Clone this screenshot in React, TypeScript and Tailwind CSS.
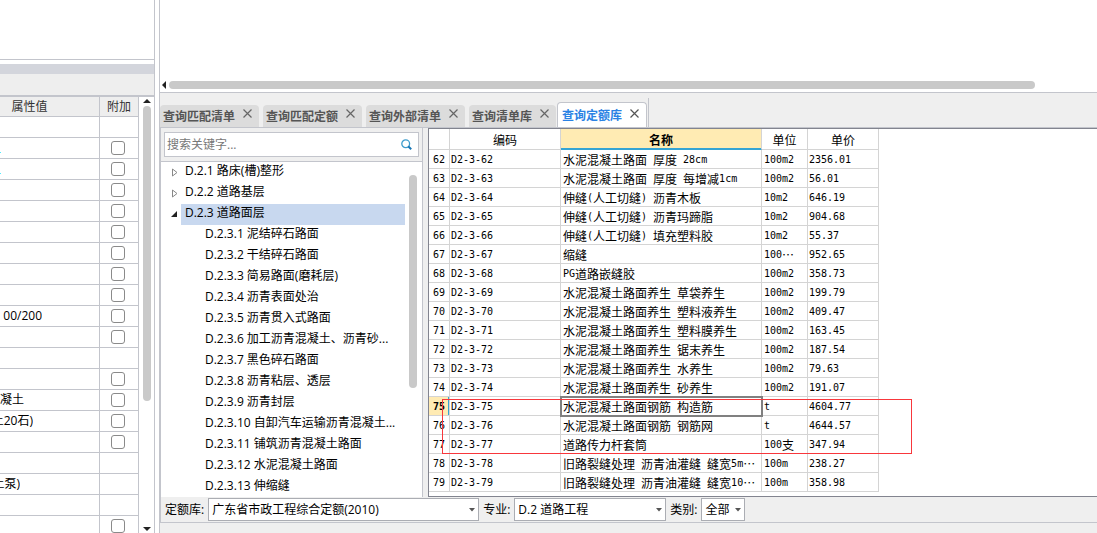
import React from "react";

const attributes = [
  { box: false },
  { box: true, mark: true },
  { box: true, mark: true },
  { box: true },
  { box: true },
  { box: true },
  { box: true },
  { box: true },
  { box: true },
  { box: true, text: "00/200", width: "w-[42px]" },
  { box: true },
  { box: false },
  { box: true },
  { box: true, text: "混凝土", width: "w-6" },
  { box: true, text: "土20石)", width: "w-[33px]" },
  { box: true },
  { box: false },
  { box: false, text: "土泵)", width: "w-5" },
  { box: false },
  { box: true },
];

const tabs = ["查询匹配清单", "查询匹配定额", "查询外部清单", "查询清单库"];

const chapters = [
  "D.2.3.1 泥结碎石路面",
  "D.2.3.2 干结碎石路面",
  "D.2.3.3 简易路面(磨耗层)",
  "D.2.3.4 沥青表面处治",
  "D.2.3.5 沥青贯入式路面",
  "D.2.3.6 加工沥青混凝土、沥青砂...",
  "D.2.3.7 黑色碎石路面",
  "D.2.3.8 沥青粘层、透层",
  "D.2.3.9 沥青封层",
  "D.2.3.10 自卸汽车运输沥青混凝土...",
  "D.2.3.11 铺筑沥青混凝土路面",
  "D.2.3.12 水泥混凝土路面",
  "D.2.3.13 伸缩缝",
];

const quotas = [
  [62, "水泥混凝土路面 厚度 28cm", "100m2", "2356.01"],
  [63, "水泥混凝土路面 厚度 每增减1cm", "100m2", "56.01"],
  [64, "伸缝(人工切缝) 沥青木板", "10m2", "646.19"],
  [65, "伸缝(人工切缝) 沥青玛蹄脂", "10m2", "904.68"],
  [66, "伸缝(人工切缝) 填充塑料胶", "10m2", "55.37"],
  [67, "缩缝", "100…", "952.65"],
  [68, "PG道路嵌缝胶", "100m2", "358.73"],
  [69, "水泥混凝土路面养生 草袋养生", "100m2", "199.79"],
  [70, "水泥混凝土路面养生 塑料液养生", "100m2", "409.47"],
  [71, "水泥混凝土路面养生 塑料膜养生", "100m2", "163.45"],
  [72, "水泥混凝土路面养生 锯末养生", "100m2", "187.54"],
  [73, "水泥混凝土路面养生 水养生", "100m2", "79.63"],
  [74, "水泥混凝土路面养生 砂养生", "100m2", "191.07"],
  [75, "水泥混凝土路面钢筋 构造筋", "t", "4604.77"],
  [76, "水泥混凝土路面钢筋 钢筋网", "t", "4644.57"],
  [77, "道路传力杆套筒", "100支", "347.94"],
  [78, "旧路裂缝处理 沥青油灌缝 缝宽5m…", "100m", "238.27"],
  [79, "旧路裂缝处理 沥青油灌缝 缝宽10…", "100m", "358.98"],
] as [number, string, string, string][];

// half-width characters take half the width of a Chinese one
function Mixed({ text, className = "pl-[2px]" }: { text: string; className?: string }) {
  return (
    <div className={"flex h-[18px] items-center pt-[2px] " + className}>
      {text
        .split(/([\x20-\x7e]+)/)
        .filter(Boolean)
        .map((part, i) =>
          /^[\x20-\x7e]/.test(part) ? (
            <span
              key={i}
              className="font-['DejaVu_Sans_Mono',monospace] text-[10px] whitespace-pre"
            >
              {part}
            </span>
          ) : (
            <span key={i}>{part}</span>
          )
        )}
    </div>
  );
}

function Close() {
  return (
    <svg width="9" height="9" viewBox="0 0 9 9" stroke="currentColor">
      <path d="M0.5 0.5L8.5 8.5M8.5 0.5L0.5 8.5" strokeWidth="1.2" />
    </svg>
  );
}

function Picker({
  id,
  label,
  value,
  width,
}: {
  id: string;
  label: string;
  value: string;
  width: string;
}) {
  return (
    <div className="flex items-center gap-1">
      <label htmlFor={id}>{label}</label>
      <div className={"relative " + width}>
        <select
          id={id}
          className="block h-[23px] w-full appearance-none border border-[#abadb3] bg-white pl-[3px] text-black outline-none"
        >
          <option>{value}</option>
        </select>
        <svg
          className="pointer-events-none absolute top-[10px] right-1"
          width="6"
          height="4"
          viewBox="0 0 6 4"
        >
          <path d="M0 0H6L3 3.5Z" fill="#555" />
        </svg>
      </div>
    </div>
  );
}

function AttributePanel() {
  return (
    <aside className="flex w-[155px] shrink-0 flex-col border-r border-[#c3c5cc]">
      <div className="h-[60px] shrink-0 border-b border-[#c3c5cc]" />
      <div className="mt-1 h-[10px] shrink-0 bg-[#d3d5dc]" />
      <div className="h-[23px] shrink-0 border-b-2 border-[#c3c5cc] bg-[#eee]" />
      <div className="flex min-h-0 flex-1">
        <div className="min-w-0 flex-1 overflow-hidden">
          <table className="w-full table-fixed border-separate border-spacing-0">
            <thead>
              <tr className="h-5 bg-[#eee] text-[#333]">
                <th className="border-r border-b border-[#c3c5cc] p-0 pr-10 font-normal">
                  属性值
                </th>
                <th className="w-[39px] border-r border-b border-[#c3c5cc] p-0 font-normal">
                  附加
                </th>
              </tr>
            </thead>
            <tbody>
              {attributes.map((row, i) => (
                <tr key={i} className="h-[21px]">
                  <td className="border-r border-b border-[#c3c5cc] p-0">
                    {row.mark && <div className="mt-2 h-px w-px bg-cyan-300" />}
                    {row.text && (
                      <div
                        className={
                          "flex h-5 items-center justify-end overflow-hidden whitespace-nowrap " +
                          row.width
                        }
                      >
                        {row.text}
                      </div>
                    )}
                  </td>
                  <td className="border-r border-b border-[#c3c5cc] p-0">
                    {row.box && (
                      <input
                        type="checkbox"
                        aria-label="附加"
                        className="ml-[11px] block size-[14px] appearance-none rounded-[3px] border border-[#8a8a8a] bg-white"
                      />
                    )}
                  </td>
                </tr>
              ))}
            </tbody>
          </table>
        </div>
        <div className="flex w-[15px] flex-col items-center pt-[2px] pb-[2px]">
          <svg width="8" height="4" viewBox="0 0 8 4">
            <path d="M0 4H8L4 0Z" fill="#222" />
          </svg>
          <div className="mt-[3px] flex min-h-0 w-2 flex-1 flex-col">
            <div className="h-[70%] rounded-full bg-[#c9c9c9]" />
          </div>
          <svg width="8" height="4" viewBox="0 0 8 4">
            <path d="M0 0H8L4 4Z" fill="#222" />
          </svg>
        </div>
      </div>
    </aside>
  );
}

function TabBar() {
  return (
    <nav className="flex h-[34px] shrink-0 items-end">
      <div className="flex gap-1 pr-px">
        {tabs.map((tab) => (
          <button
            key={tab}
            className="flex h-[22px] gap-2 rounded-t bg-[#dcdcdc] pr-[7px] pl-[3px] font-bold text-[#555]"
          >
            <span className="leading-[23px]">{tab}</span>
            <span className="pt-1 text-[#666]">
              <Close />
            </span>
          </button>
        ))}
      </div>
      <div className="flex h-[29px] items-end border-r border-[#c3c5cc] pr-px">
        <button className="flex h-[25px] gap-2 rounded-t border border-b-0 border-[#c3c5cc] bg-white pr-[7px] pl-1 font-bold text-[#2a82e4]">
          <span className="leading-[26px]">查询定额库</span>
          <span className="pt-[6px] text-[#555]">
            <Close />
          </span>
        </button>
      </div>
    </nav>
  );
}

function ChapterTree() {
  return (
    <section className="flex w-[262px] shrink-0 flex-col border-r border-[#c3c5cc]">
      <div className="shrink-0 border-b border-[#c3c5cc] px-[3px] pt-1 pb-1">
        <div className="flex h-[25px] items-center border border-[#c3c5cc] bg-white pr-[6px] pl-[2px]">
          <input
            type="text"
            aria-label="搜索关键字"
            placeholder="搜索关键字..."
            className="min-w-0 flex-1 outline-none placeholder:text-[#777]"
          />
          <button aria-label="搜索">
            <svg width="11" height="11" viewBox="0 0 11 11" fill="none">
              <circle cx="4.7" cy="4.7" r="3.9" stroke="#3d9ccc" strokeWidth="1.3" />
              <path d="M7.2 7.2L10.2 10.2" stroke="#1675b5" strokeWidth="2" />
            </svg>
          </button>
        </div>
      </div>
      <div className="flex min-h-0 flex-1 bg-white">
        <ul className="min-w-0 flex-1 overflow-hidden leading-[18px] whitespace-nowrap">
          {["D.2.1 路床(槽)整形", "D.2.2 道路基层"].map((name) => (
            <li key={name} className="flex h-[21px]">
              <svg className="mt-[6px] mr-1 ml-[11px]" width="6" height="9" viewBox="0 0 6 9">
                <path d="M0.5 1V8L5 4.5Z" fill="none" stroke="#888" />
              </svg>
              <span className="pl-[3px]">{name}</span>
            </li>
          ))}
          <li>
            <div className="flex h-[21px]">
              <svg className="mt-[7px] mr-1 ml-[10px]" width="6" height="6" viewBox="0 0 6 6">
                <path d="M0 6H6V0Z" fill="#222" />
              </svg>
              <span className="flex-1 bg-[#c8d8ef] pl-1">D.2.3 道路面层</span>
            </div>
            <ul>
              {chapters.map((name) => (
                <li key={name} className="h-[21px] pl-11">
                  {name}
                </li>
              ))}
            </ul>
          </li>
        </ul>
        <div className="flex w-[17px] flex-col pt-[13px] pr-[5px] pl-1">
          <div className="h-[66%] rounded-full bg-[#c9c9c9]" />
        </div>
      </div>
    </section>
  );
}

function QuotaTable() {
  return (
    <section className="relative ml-[5px] min-w-0 flex-1 overflow-hidden border-t border-b border-l border-[#82848f] bg-white">
      <table className="table-fixed border-separate border-spacing-0 font-['Noto_Sans_CJK_SC',sans-serif] leading-[18px] whitespace-nowrap [&_td]:border-r [&_td]:border-b [&_td]:border-[#d4d4d4] [&_td]:p-0 [&_th]:border-r [&_th]:border-b [&_th]:border-[#d4d4d4] [&_th]:px-0 [&_th]:pt-[2px] [&_th]:pb-0">
        <colgroup>
          <col className="w-[21px]" />
          <col className="w-[111px]" />
          <col className="w-[201px]" />
          <col className="w-[46px]" />
          <col className="w-[71px]" />
        </colgroup>
        <thead>
          <tr className="h-[21px]">
            <th></th>
            <th className="font-normal">编码</th>
            <th className="border-b-[#35a4d4]! bg-[#ffebb3] font-bold shadow-[inset_0_-1px_0_#35a4d4]">
              名称
            </th>
            <th className="font-normal">单位</th>
            <th className="font-normal">单价</th>
          </tr>
        </thead>
        <tbody>
          {quotas.map(([no, name, unit, price]) => {
            const active = no === 75;
            return (
              <tr key={no} className="h-[19px]">
                <td
                  className={
                    active ? "bg-[#ffebb3] font-bold shadow-[inset_-1px_0_0_#35a4d4]" : ""
                  }
                >
                  <Mixed text={String(no)} className="justify-center" />
                </td>
                <td>
                  <Mixed text={"D2-3-" + no} className="pl-px" />
                </td>
                <td className={active ? "outline-2 -outline-offset-1 outline-[#808080]" : ""}>
                  <Mixed text={name} />
                </td>
                <td>
                  <Mixed text={unit} />
                </td>
                <td>
                  <Mixed text={price} className="pl-px" />
                </td>
              </tr>
            );
          })}
        </tbody>
      </table>
      <div className="pointer-events-none absolute top-[270px] left-[13px] h-[55px] w-[470px] border border-[#f8373c]" />
    </section>
  );
}

export default function App() {
  return (
    <div
      lang="zh-CN"
      className="flex h-screen overflow-hidden bg-white font-['Open_Sans','Noto_Sans_CJK_SC',sans-serif] text-[12px] leading-[18px] text-black"
    >
      <AttributePanel />
      <main className="ml-1 flex min-w-0 flex-1 flex-col border-l border-[#c3c5cc] bg-[#efefef]">
        <div className="flex h-[93px] shrink-0 items-end border-b border-[#c3c5cc] bg-white pb-[3px] pl-[2px]">
          <svg width="4" height="8" viewBox="0 0 4 8">
            <path d="M4 0V8L0 4Z" fill="#222" />
          </svg>
          <div className="ml-[3px] flex-1 pr-[62px]">
            <div className="h-2 rounded-full bg-[#c9c9c9]" />
          </div>
        </div>
        <TabBar />
        <div className="flex min-h-0 flex-1 border-t border-l border-[#c3c5cc]">
          <ChapterTree />
          <QuotaTable />
        </div>
        <footer className="flex h-[26px] shrink-0 items-center gap-1 border-b border-l border-[#c3c5cc] pl-1">
          <Picker id="library" label="定额库:" value="广东省市政工程综合定额(2010)" width="w-[271px]" />
          <Picker id="major" label="专业:" value="D.2 道路工程" width="w-[152px]" />
          <Picker id="kind" label="类别:" value="全部" width="w-11" />
        </footer>
        <div className="h-[10px] shrink-0" />
      </main>
    </div>
  );
}
